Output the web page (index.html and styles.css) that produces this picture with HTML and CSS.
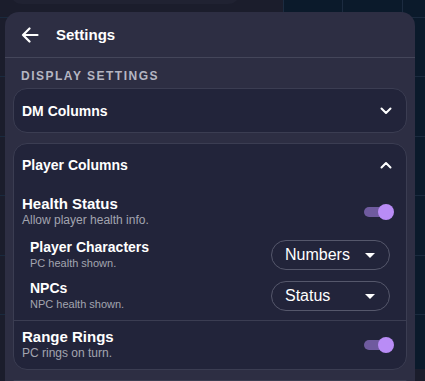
FILE: index.html
```html
<!DOCTYPE html>
<html lang="en">
<head>
<meta charset="UTF-8" />
<meta name="viewport" content="width=device-width, initial-scale=1" />
<title>Settings</title>
<link rel="stylesheet" href="styles.css">
</head>
<body>
  <div class="backdrop">
    <div class="stub"></div>
    <div class="panel">
      <div class="panel-head">
        <button class="back" aria-label="Back">
          <svg width="18" height="16" viewBox="0 0 18 16" fill="none" stroke="#fff" stroke-width="2.2" stroke-linecap="round" stroke-linejoin="round">
            <path d="M16.5 8H2M8.5 1.5L2 8l6.5 6.5"/>
          </svg>
        </button>
        <h1>Settings</h1>
      </div>

      <div class="panel-body">
        <div class="section-label">Display Settings</div>

        <div class="card">
          <div class="card-head">
            <span>DM Columns</span>
            <svg class="chev" width="12" height="8" viewBox="0 0 12 8" fill="none" stroke="#fff" stroke-width="2" stroke-linecap="round" stroke-linejoin="round"><path d="M1.5 1.5L6 6l4.5-4.5"/></svg>
          </div>
        </div>

        <div class="card open">
          <div class="card-head">
            <span>Player Columns</span>
            <svg class="chev" width="12" height="8" viewBox="0 0 12 8" fill="none" stroke="#fff" stroke-width="2" stroke-linecap="round" stroke-linejoin="round"><path d="M1.5 6.5L6 2l4.5 4.5"/></svg>
          </div>

          <div class="row first">
            <div class="text">
              <div class="title wide">Health Status</div>
              <div class="sub">Allow player health info.</div>
            </div>
            <div class="toggle on"><span class="knob"></span></div>
          </div>

          <div class="row nested pc">
            <div class="text">
              <div class="title">Player Characters</div>
              <div class="sub small">PC health shown.</div>
            </div>
            <div class="select">Numbers<span class="caret"></span></div>
          </div>

          <div class="row nested npc">
            <div class="text">
              <div class="title">NPCs</div>
              <div class="sub small">NPC health shown.</div>
            </div>
            <div class="select">Status<span class="caret"></span></div>
          </div>

          <div class="row divided">
            <div class="text">
              <div class="title wide">Range Rings</div>
              <div class="sub">PC rings on turn.</div>
            </div>
            <div class="toggle on"><span class="knob"></span></div>
          </div>
        </div>

        <div class="card"></div>
      </div>
    </div>
  </div>
</body>
</html>
```

FILE: styles.css
```css
* {
  box-sizing: border-box;
}
body {
  margin: 0;
  font-family: 'Liberation Sans', Arial, sans-serif;
  background: #1b1d2c;
  height: 381px;
  overflow: hidden;
}
/* map canvas behind the panel */
.backdrop {
  height: 381px;
  background:
    repeating-linear-gradient(to right, transparent 0 283px, #1c2b40 283px 284px, transparent 284px 342px, #1c2b40 342px 343px, transparent 343px 402px, #1c2b40 402px 403px, transparent 403px 425px),
    repeating-linear-gradient(to bottom, transparent 0 29px, #1a2a3e 29px 30px, transparent 30px 59.5px),
    linear-gradient(to right, #1b1d2c 283px, #0b1a2b 283px);
}
.stub {
  width: 230px;
  height: 16px;
  margin: -12px 0 0 10px;
  background: #202232;
  border-radius: 0 0 12px 12px;
}
.panel {
  width: 410px;
  height: 369px;
  margin: 8px 0 0 5px;
  background: #2d2e43;
  border-radius: 14px 14px 0 0;
  overflow: hidden;
}
.panel-head {
  display: flex;
  align-items: center;
  height: 46px;
  padding-left: 16px;
  border-bottom: 1px solid #44465a;
}
.back {
  background: none;
  border: none;
  padding: 0;
  margin: 0;
  width: 20px;
  height: 16px;
  display: flex;
  align-items: center;
}
.panel-head h1 {
  margin: 0 0 0 15px;
  font-size: 15px;
  font-weight: bold;
  color: #fff;
}
.panel-body {
  padding: 11px 8px 0 8px;
}
.section-label {
  font-size: 12px;
  font-weight: bold;
  letter-spacing: 1.5px;
  text-transform: uppercase;
  color: #b5b6c2;
  padding-left: 8px;
  margin-bottom: 5px;
}
.card {
  background: #22243a;
  border: 1px solid #3b3d52;
  border-radius: 14px;
  margin-bottom: 10px;
}
.card-head {
  display: flex;
  align-items: center;
  justify-content: space-between;
  height: 43px;
  padding: 0 14px 0 8px;
  font-size: 14px;
  font-weight: bold;
  color: #fff;
}
.card.open .card-head {
  height: 42px;
}
.row {
  display: flex;
  align-items: center;
  justify-content: space-between;
  padding: 0 12px 0 8px;
  margin-top: 8px;
}
.row.first {
  margin-top: 10px;
}
.row.nested {
  padding-left: 16px;
  padding-right: 16px;
}
.row.pc {
  margin-top: 11px;
}
.row.npc {
  margin-top: 9px;
}
.row.divided {
  border-top: 1px solid #3b3d52;
  padding-top: 8px;
  padding-bottom: 8px;
}
.title {
  font-size: 14px;
  font-weight: bold;
  color: #fff;
  line-height: 16px;
}
.title.wide {
  font-size: 15px;
}
.sub {
  font-size: 12px;
  color: #a3a4b0;
  line-height: 16px;
}
.sub.small {
  font-size: 11px;
}
.toggle {
  width: 30px;
  height: 16px;
  position: relative;
}
.toggle::before {
  content: "";
  position: absolute;
  left: 0;
  right: 4px;
  top: 3px;
  height: 10px;
  border-radius: 5px;
  background: #6f5b9f;
}
.toggle .knob {
  position: absolute;
  right: 0;
  top: 0;
  width: 16px;
  height: 16px;
  border-radius: 50%;
  background: #b98cf6;
}
.select {
  width: 119px;
  height: 30px;
  border: 1px solid #55576b;
  border-radius: 15px;
  display: flex;
  align-items: center;
  justify-content: space-between;
  padding: 0 14px 0 13px;
  font-size: 16px;
  color: #fff;
}
.caret {
  width: 0;
  height: 0;
  border-left: 5px solid transparent;
  border-right: 5px solid transparent;
  border-top: 5px solid #fff;
}
```
